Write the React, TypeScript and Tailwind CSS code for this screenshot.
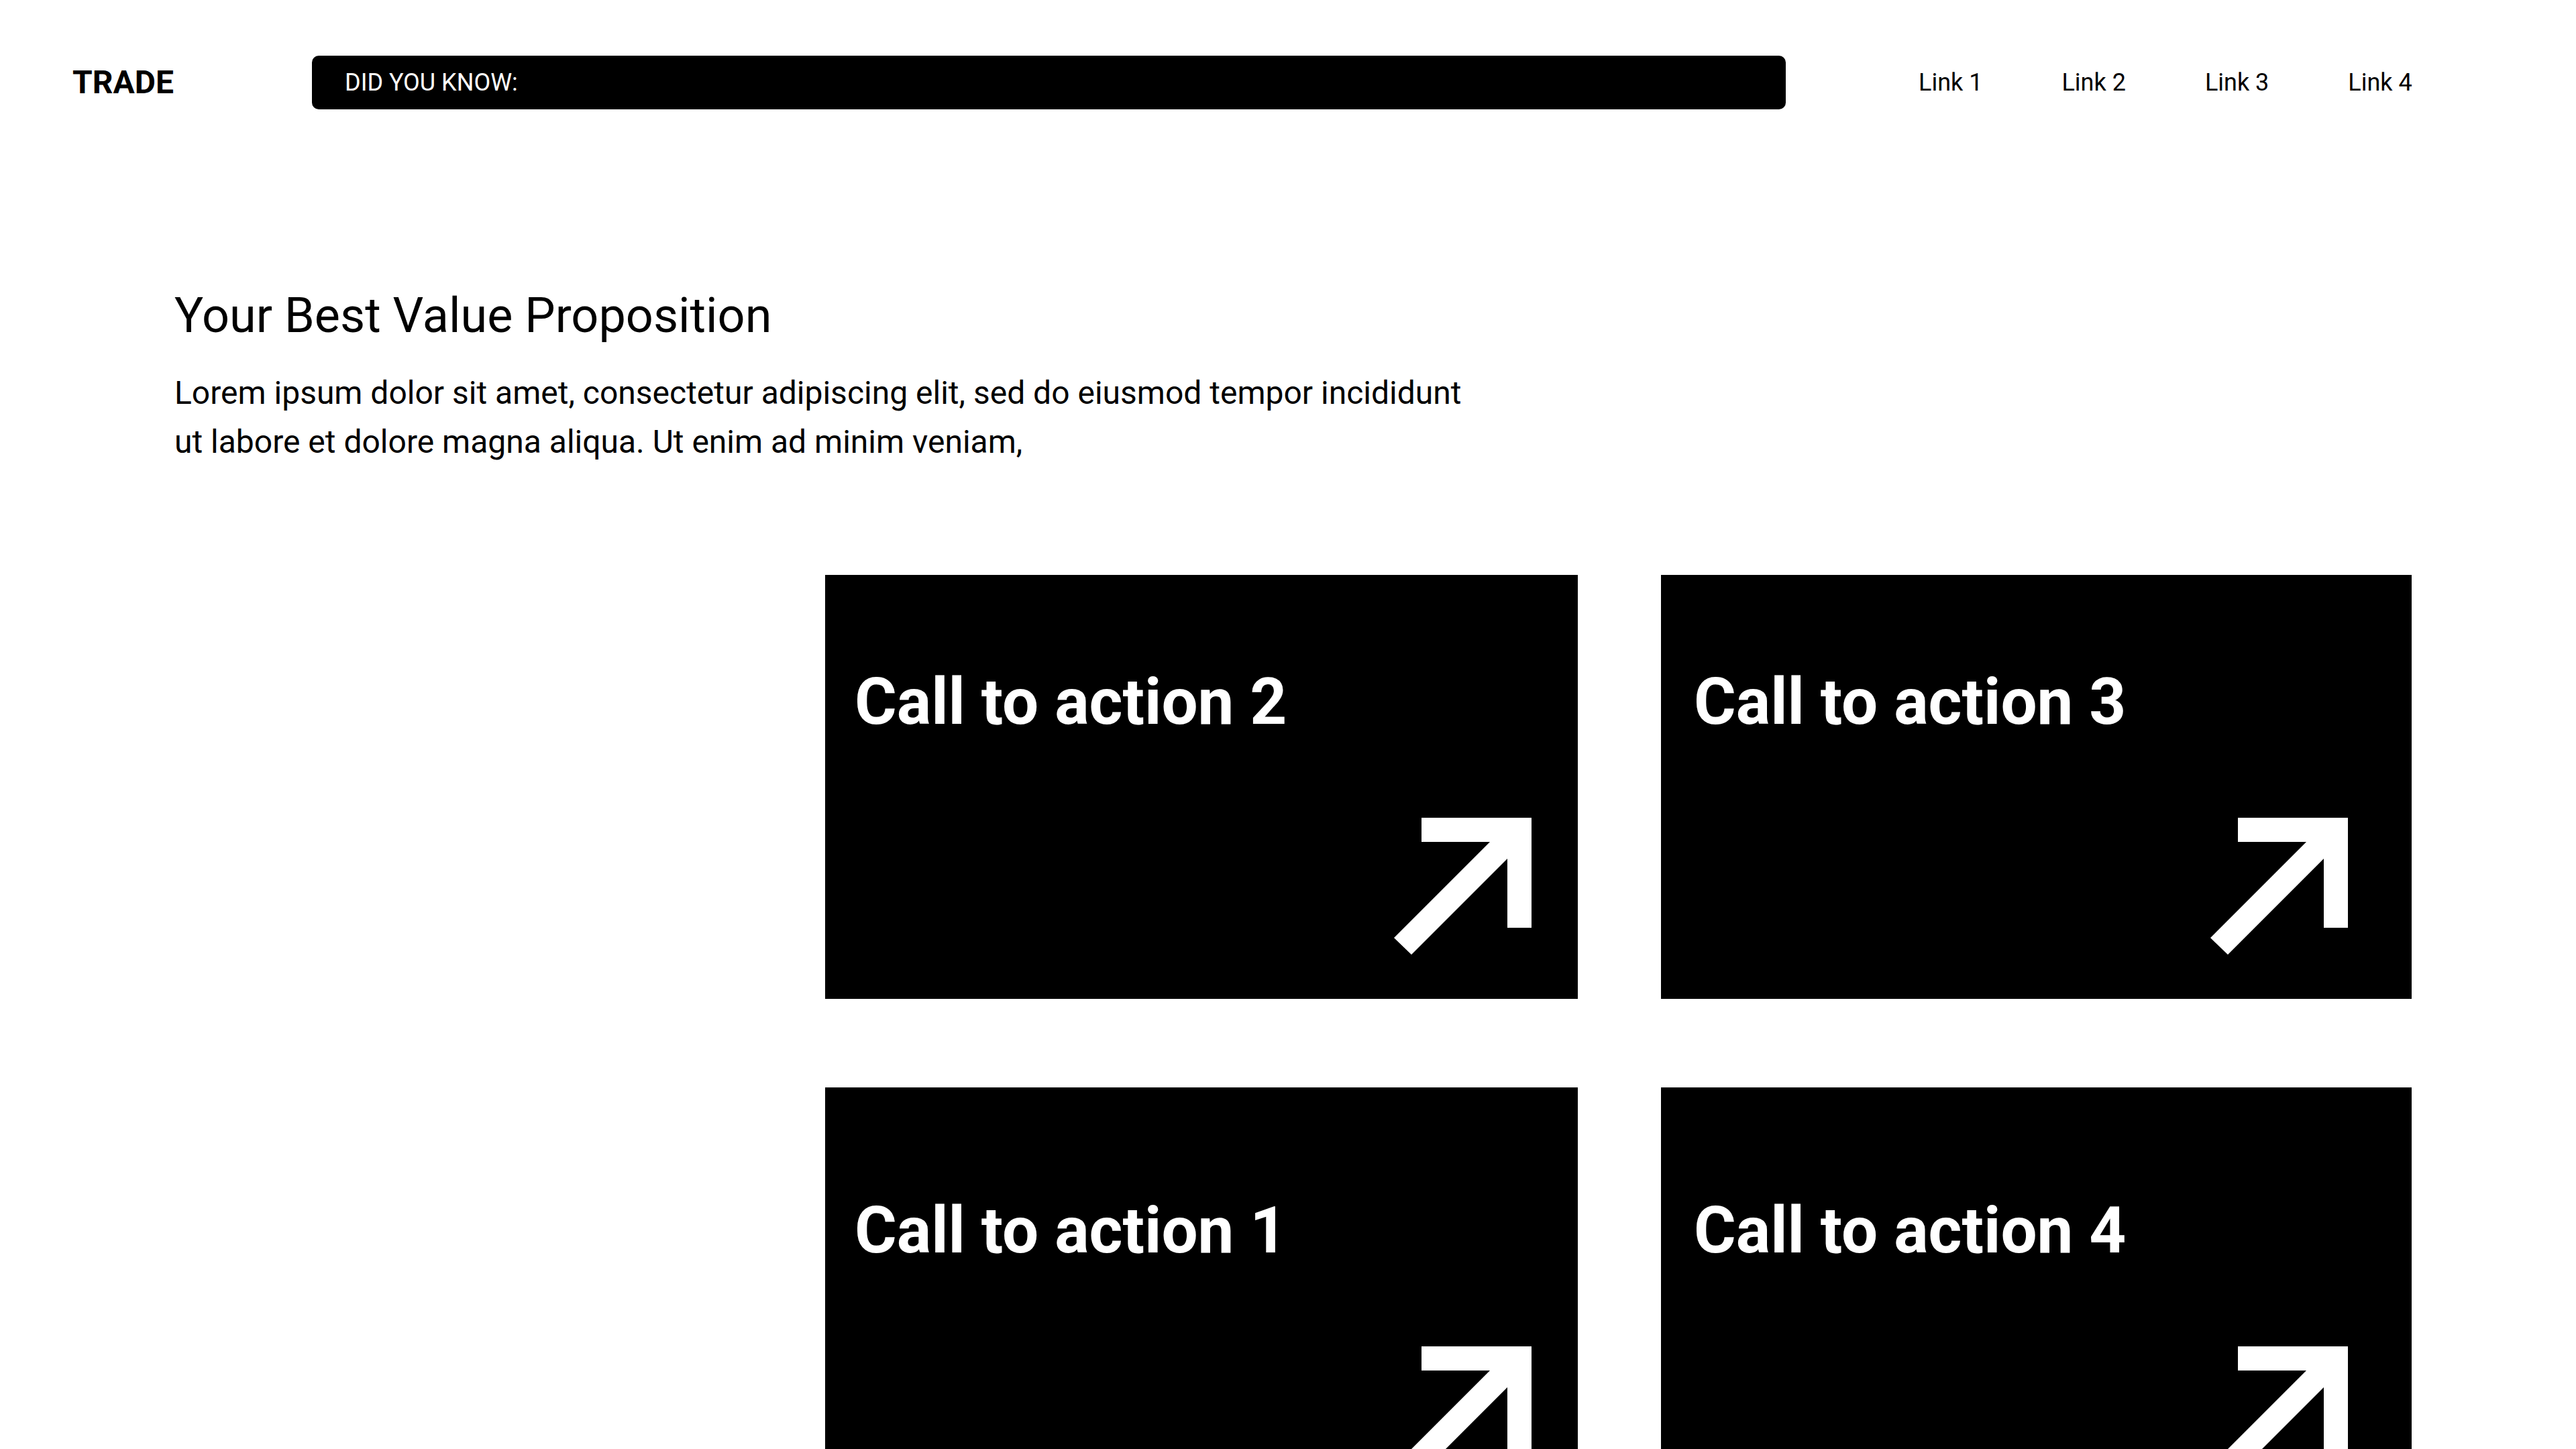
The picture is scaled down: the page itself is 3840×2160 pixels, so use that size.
import React from "react";

const links = ["Link 1", "Link 2", "Link 3", "Link 4"];

interface CallToAction {
    title: string;
    lower?: boolean;
    right?: boolean;
}

const rows: CallToAction[][] = [
    [{ title: "Call to action 2" }, { title: "Call to action 3", right: true }],
    [{ title: "Call to action 1", lower: true }, { title: "Call to action 4", lower: true, right: true }],
];

function ArrowIcon() {
    return (
        <svg width="205" height="204" viewBox="0 0 205 204" className="block shrink-0">
            <polygon
                fill="#ffffff"
                points="205,0 41,0 41,36 143,36 0,179 26,204 169,61 169,164 205,164"
            />
        </svg>
    );
}

function CtaCard({ title, lower, right }: CallToAction) {
    return (
        <a
            href="#"
            className={
                "flex h-[632px] shrink-0 flex-col bg-black text-white " +
                (right ? "w-[1119px] pl-[49px] pr-[95px] " : "w-[1122px] pl-[44px] pr-[69px] ") +
                (lower ? "pt-[165px]" : "pt-[141px]")
            }
        >
            <h3 className="text-[96px] leading-none font-bold whitespace-nowrap">{title}</h3>
            <div className="mt-[125px] self-end">
                <ArrowIcon />
            </div>
        </a>
    );
}

export default function App() {
    return (
        <div className="min-h-screen w-full bg-white text-black font-['Roboto',sans-serif]">
            {/* top bar */}
            <header className="flex items-center pt-[83px] pl-[108px] pr-[245px]">
                <div className="w-[357px] shrink-0 text-[48px] leading-none font-bold">TRADE</div>
                <div className="flex h-[80px] w-[2197px] shrink-0 items-center rounded-[10px] bg-black pl-[49px] text-[36px] text-white">
                    DID YOU KNOW:
                </div>
                <nav className="ml-[198px] flex shrink-0 items-center gap-[118px] text-[36px] leading-none whitespace-nowrap">
                    {links.map((link) => (
                        <a key={link} href="#">
                            {link}
                        </a>
                    ))}
                </nav>
            </header>

            <main className="pl-[260px] pr-[245px]">
                <section className="pt-[272px]">
                    <h1 className="text-[72px] leading-none">Your Best Value Proposition</h1>
                    <p className="mt-[42px] max-w-[1950px] text-[48px] leading-[73px]">
                        Lorem ipsum dolor sit amet, consectetur adipiscing elit, sed do eiusmod tempor incididunt ut labore et
                        dolore magna aliqua. Ut enim ad minim veniam,
                    </p>
                </section>

                <section className="mt-[162px] flex flex-col items-end gap-[132px]">
                    {rows.map((row, i) => (
                        <div key={i} className="flex gap-[124px]">
                            {row.map((cta) => (
                                <CtaCard key={cta.title} {...cta} />
                            ))}
                        </div>
                    ))}
                </section>
            </main>
        </div>
    );
}
